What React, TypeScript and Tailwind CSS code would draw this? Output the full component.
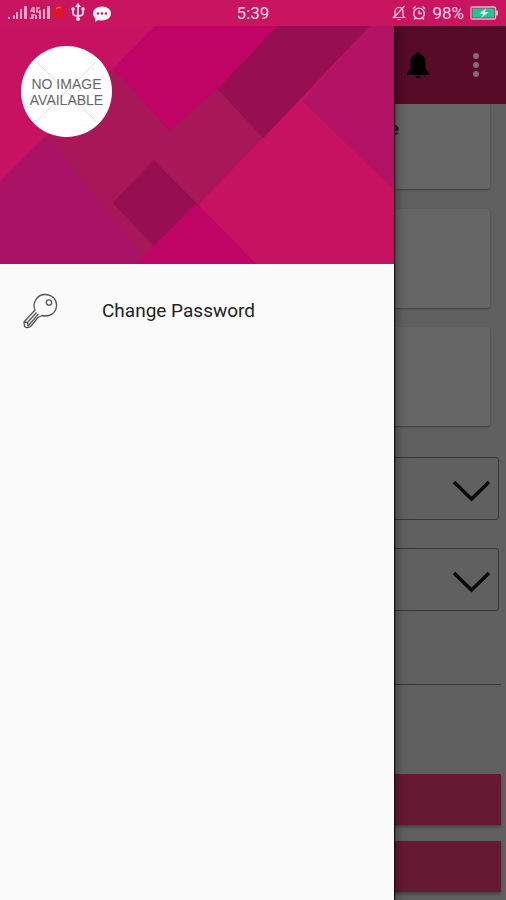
import React from "react";

function StatusBar() {
  return (
    <div className="relative z-20 flex h-[26px] shrink-0 items-center justify-between bg-[#c91460] pl-2 pr-[7px] text-[#fbd3e4]">
      <div className="flex items-center">
        <svg className="h-[26px] w-[104px]" viewBox="0 0 104 26" aria-label="Signal, USB and message notifications" role="img">
          <g fill="#f3a6c8">
            <rect x="0" y="17" width="2" height="2" />
            <rect x="5" y="15" width="2" height="4" />
            <rect x="8" y="12" width="2" height="7" />
            <rect x="12" y="9" width="2" height="10" />
            <rect x="16" y="6" width="3" height="13" />
            <rect x="23" y="17" width="2" height="2" />
            <rect x="27" y="15" width="2" height="4" />
            <rect x="31" y="12" width="2" height="7" />
            <rect x="35" y="9" width="2" height="10" />
            <rect x="39" y="6" width="3" height="13" />
          </g>
          <path d="M25 7l-2 4h4M26 7v6M32 8h-3v4h3v-2M23 15h3l-3 3h3" fill="none" stroke="#f3a6c8" strokeWidth="1.500" />
          <path d="M44 13c0-4 3-7 6-8l2 1 2-1c3 2 4 6 3 9-2 4-4 5-6 5-4-1-7-3-7-6z" fill="#d9172a" />
          <path d="M48 9c2-2 4-2 5-1" fill="none" stroke="#fb5b4b" strokeWidth="1.500" />
          <g fill="none" stroke="#fde4ef" strokeWidth="1.700">
            <path d="M70 6v13M65 9v4q0 3 5 3M75 9v4q0 3-5 3" />
          </g>
          <g fill="#fde4ef">
            <path d="M70 3l3 4h-6z" />
            <circle cx="65" cy="9" r="1.700" />
            <rect x="73.500" y="7.500" width="3" height="3" />
            <circle cx="70" cy="19" r="2" />
          </g>
          <path d="M94 6.500c5.200 0 9 3 9 7s-3.800 7-9 7c-1.300 0-2.500-.1-3.500-.5L87 22l.5-3.500C86 17.300 85 15.500 85 13.500c0-4 3.800-7 9-7z" fill="#fff2f7" />
          <g fill="#b52464">
            <circle cx="90" cy="13.500" r="1.200" />
            <circle cx="94" cy="13.500" r="1.200" />
            <circle cx="98" cy="13.500" r="1.200" />
          </g>
        </svg>
      </div>
      <time className="absolute left-1/2 -translate-x-1/2 text-[17px] leading-[26px]">5:39</time>
      <div className="flex items-center gap-[6px]">
        <svg className="h-4 w-[14px]" viewBox="0 0 14 16" fill="none" stroke="currentColor" strokeWidth="1.200" aria-hidden="true">
          <path d="M3 11V7c0-3 2-4.500 4-4.500S11 4 11 7v4l1.500 1.500h-11zM5.500 14.500h3M12.500 1l-11 12" />
        </svg>
        <svg className="h-4 w-[14px]" viewBox="0 0 14 16" fill="none" stroke="currentColor" strokeWidth="1.300" aria-hidden="true">
          <circle cx="7" cy="8.500" r="5.300" />
          <path d="M7 5.500v3h3M1 4l2.500-2.500M13 4l-2.500-2.500M3.500 13L2 14.500M10.500 13l1.500 1.500" />
        </svg>
        <span className="text-[17px] leading-[26px]">98%</span>
        <svg className="h-[14px] w-[29px]" viewBox="0 0 29 14" aria-label="Battery charging" role="img">
          <rect x="1" y="1" width="24.500" height="12" rx="1" fill="#c91460" stroke="#dfb9c8" strokeWidth="1.300" />
          <rect x="2.500" y="2.500" width="21.500" height="9" fill="#1fc891" />
          <path d="M27 4.500v5" stroke="#dfb9c8" strokeWidth="2" />
          <path d="M16.500 2L9.500 7.800h4L11 12l7.500-5.800h-4z" fill="#e9fff7" />
        </svg>
      </div>
    </div>
  );
}

function Toolbar() {
  return (
    <header className="flex h-[78px] shrink-0 items-center justify-end gap-[18px] bg-[#580b27] pr-[10px] shadow-[0_1px_3px_rgba(0,0,0,0.4)]">
      <button type="button" aria-label="Notifications" className="flex h-10 w-10 items-center justify-center">
        <svg className="h-7 w-6" viewBox="0 0 24 28" fill="#000" aria-hidden="true">
          <path d="M12 1c1.200 0 1.800.8 1.800 2 3.800 1 5.800 4 5.800 8v7l3.400 4v2H1v-2l3.400-4v-7c0-4 2-7 5.800-8 0-1.200.6-2 1.800-2zM9.500 25h5c0 1.400-1 2.500-2.500 2.500S9.500 26.400 9.500 25z" />
        </svg>
      </button>
      <button type="button" aria-label="More options" className="flex h-10 w-10 flex-col items-center justify-center gap-[3px]">
        <span className="h-[6px] w-[6px] rounded-full bg-[#8c6772]" />
        <span className="h-[6px] w-[6px] rounded-full bg-[#8c6772]" />
        <span className="h-[6px] w-[6px] rounded-full bg-[#8c6772]" />
      </button>
    </header>
  );
}

const card = "mr-4 rounded-[3px] bg-[#666] shadow-[0_1px_2px_rgba(0,0,0,0.35)]";

function Picker({ label }: { label: string }) {
  return (
    <div className="relative mr-[7px]">
      <select aria-label={label} className="block h-[63px] w-full appearance-none rounded-[3px] border border-[#383838] bg-transparent" />
      <svg className="pointer-events-none absolute right-2 top-[22px] h-6 w-10" viewBox="0 0 40 24" fill="none" stroke="#080808" strokeWidth="3.500" aria-hidden="true">
        <path d="M3 3l17.500 17L38 3" />
      </svg>
    </div>
  );
}

function MainContent() {
  return (
    <main className="flex flex-1 flex-col bg-[#606060]">
      <section className={`${card} flex h-[85px] justify-end rounded-t-none pr-[91px] pt-[14px]`}>
        <span className="text-[18px] font-bold leading-[22px] text-[#181818]">e</span>
      </section>
      <section className={`${card} mt-5 h-[99px]`} />
      <section className={`${card} mt-[19px] h-[99px]`} />
      <div className="mt-[31px] flex flex-col gap-7">
        <Picker label="First selection" />
        <Picker label="Second selection" />
      </div>
      <input aria-label="Details" type="text" className="mr-[5px] mt-7 h-[46px] border-b border-[#383838] bg-transparent" />
      <div className="mr-[5px] mt-[89px] flex flex-col gap-4">
        <button type="button" aria-label="First action" className="h-[51px] bg-[#661932] shadow-[0_2px_3px_rgba(0,0,0,0.35)]" />
        <button type="button" aria-label="Second action" className="h-[51px] bg-[#661932] shadow-[0_2px_3px_rgba(0,0,0,0.35)]" />
      </div>
    </main>
  );
}

function HeaderArt() {
  return (
    <svg className="absolute inset-0 h-full w-full" viewBox="0 0 395 238" preserveAspectRatio="none" aria-hidden="true">
      <rect width="395" height="238" fill="#c61261" />
      <path d="M155 0H280L220 64L170 106L113 43z" fill="#c00465" />
      <path d="M113 43L170 105L218 63L264 111L142 238L45 112z" fill="#a81758" />
      <path d="M0 155L45 111L57 122L150 238H0z" fill="#aa1365" />
      <path d="M278 0H371L264 112L218 63z" fill="#970f51" />
      <path d="M371 0H395V164L303 75z" fill="#b31364" />
      <path d="M197 177L136 238H257z" fill="#c00465" />
      <path d="M154 134L197 177L154 220L113 177z" fill="#970f51" />
    </svg>
  );
}

function Drawer() {
  return (
    <aside className="absolute inset-y-0 left-0 right-[112px] bg-[#fafafa] shadow-[1px_0_1px_#111,3px_0_10px_rgba(0,0,0,0.35)]">
      <div className="relative h-[238px] overflow-hidden">
        <HeaderArt />
        <div className="relative ml-[21px] mt-5 flex h-[91px] w-[91px] items-center justify-center overflow-hidden rounded-full bg-white">
          <svg className="absolute inset-0 h-full w-full" viewBox="0 0 91 91" stroke="#dedede" aria-hidden="true">
            <path d="M16 16l59 59M75 16L16 75" />
          </svg>
          <p className="relative flex flex-col whitespace-nowrap text-center font-['Liberation_Sans',Arial,sans-serif] text-[14px] leading-4 text-[#666]">
            <span>NO IMAGE</span>
            <span>AVAILABLE</span>
          </p>
        </div>
      </div>
      <nav>
        <a href="#change-password" className="flex h-[93px] items-center gap-11 pl-[22px] text-[19px] leading-6 text-[#222]">
          <svg className="h-9 w-9" viewBox="0 0 36 36" fill="none" stroke="#555" strokeWidth="1.300" strokeLinejoin="round" aria-hidden="true">
            <path d="M13 17C10 10 15 1.500 23 1.500c7 0 12 5 11.500 11.500-.5 7-7 11.500-14.500 9.500l-4 2-6.500 8c-2 2-5 2.500-7 1L2 29z" />
            <circle cx="27" cy="9.500" r="2.700" />
            <path d="M14.500 19.500L5.500 29.500M16.500 21L6 33M2 29l3.500.5.5 4" />
          </svg>
          <span>Change Password</span>
        </a>
      </nav>
    </aside>
  );
}

export default function App() {
  return (
    <div className="flex min-h-screen flex-col overflow-hidden bg-[#606060] font-[Roboto,sans-serif]">
      <StatusBar />
      <div className="relative flex flex-1 flex-col">
        <Toolbar />
        <MainContent />
        <Drawer />
      </div>
    </div>
  );
}
